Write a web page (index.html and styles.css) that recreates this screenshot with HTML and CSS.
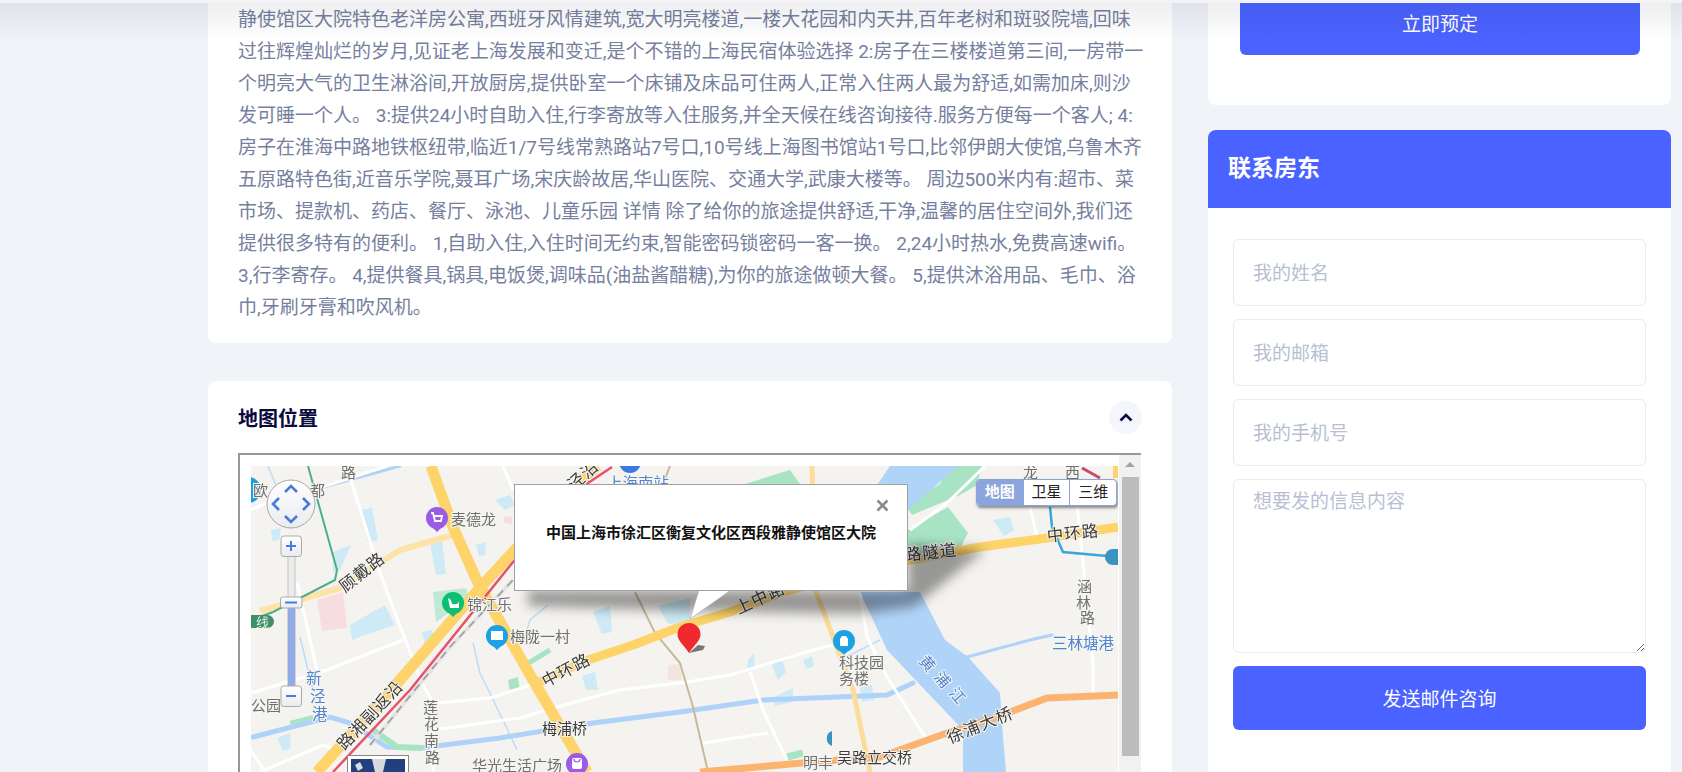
FILE: index.html
```html
<!DOCTYPE html>
<html lang="zh-CN">
<head>
<meta charset="utf-8">
<title>房源详情</title>
<link rel="stylesheet" href="styles.css">
</head>
<body>
<div class="top-shadow"></div>
<div class="page">
  <main class="main-col">
    <section class="card desc-card">
      <p class="desc">静使馆区大院特色老洋房公寓,西班牙风情建筑,宽大明亮楼道,一楼大花园和内天井,百年老树和斑驳院墙,回味过往辉煌灿烂的岁月,见证老上海发展和变迁,是个不错的上海民宿体验选择 2:房子在三楼楼道第三间,一房带一个明亮大气的卫生淋浴间,开放厨房,提供卧室一个床铺及床品可住两人,正常入住两人最为舒适,如需加床,则沙发可睡一个人。 3:提供24小时自助入住,行李寄放等入住服务,并全天候在线咨询接待.服务方便每一个客人; 4:房子在淮海中路地铁枢纽带,临近1/7号线常熟路站7号口,10号线上海图书馆站1号口,比邻伊朗大使馆,乌鲁木齐五原路特色街,近音乐学院,聂耳广场,宋庆龄故居,华山医院、交通大学,武康大楼等。 周边500米内有:超市、菜市场、提款机、药店、餐厅、泳池、儿童乐园 详情 除了给你的旅途提供舒适,干净,温馨的居住空间外,我们还提供很多特有的便利。 1,自助入住,入住时间无约束,智能密码锁密码一客一换。 2,24小时热水,免费高速wifi。 3,行李寄存。 4,提供餐具,锅具,电饭煲,调味品(油盐酱醋糖),为你的旅途做顿大餐。 5,提供沐浴用品、毛巾、浴巾,牙刷牙膏和吹风机。</p>
    </section>
    <section class="card map-card">
      <header class="map-head">
        <h2 class="map-title">地图位置</h2>
        <span class="collapse-btn">
          <svg width="14" height="9" viewBox="0 0 14 9"><path d="M1.5 7.5 7 2l5.500 5.500" fill="none" stroke="#0b0b4a" stroke-width="2.600"/></svg>
        </span>
      </header>
      <div class="map-frame">
        <div class="map-canvas">
          <svg class="map-svg" width="867" height="306" viewBox="251 466 867 306">
            <defs>
              <filter id="soft" x="-5%" y="-5%" width="110%" height="110%"><feGaussianBlur stdDeviation="0.45"/></filter>
              <filter id="shade" x="-20%" y="-60%" width="140%" height="220%"><feGaussianBlur stdDeviation="6"/></filter>
              <linearGradient id="knob" x1="0" y1="0" x2="0" y2="1"><stop offset="0" stop-color="#fff"/><stop offset="1" stop-color="#e9ebee"/></linearGradient>
            </defs>
            <g filter="url(#soft)">
              <rect x="251" y="466" width="867" height="306" fill="#f4f3f0"/>
              <g fill="#cdeaf6">
                <path d="M350 625 385 605 395 625 365 635 352 640Z"/>
                <path d="M362 510 372 508 378 540 368 542Z"/>
                <path d="M430 542 442 540 446 574 436 575Z"/>
                <path d="M476 545 486 542 485 555 479 556Z"/>
                <path d="M333 552 351 545 340 570 333 572Z"/>
                <path d="M271 530 281 528 279 540 272 541Z"/>
                <path d="M422 632 432 630 435 640 426 650Z"/>
                <path d="M582 676 595 672 598 690 586 690Z"/>
                <path d="M593 612 610 606 612 632 602 634Z"/>
                <path d="M658 606 690 598 690 622 668 624Z"/>
                <path d="M772 698 793 688 793 702 775 706Z"/>
                <path d="M803 660 812 656 814 666 806 669Z"/>
                <path d="M748 660 754 653 755 668 747 668Z"/>
                <path d="M993 520 1010 517 1014 530 1004 536Z"/>
                <path d="M277 738 290 733 291 748 283 751Z"/>
                <path d="M495 500 510 495 515 505 505 510Z"/>
                <path d="M860 688 872 685 874 700 862 702Z"/>
                <path d="M772 665 782 660 786 672 778 680Z"/>
              </g>
              <path d="M317 600 343 592 347 628 322 631Z" fill="#f7dde0"/>
              <path d="M503 517 512 516 512 524 505 523Z" fill="#f7dde0"/>
              <path d="M668 665 680 664 682 680 668 680Z" fill="#f3e4df"/>
              <g fill="#a8e4c4">
                <path d="M908 530 948 507 968 533 960 548 908 556Z"/>
                <path d="M950 465 982 465 977 485 960 495 912 515 905 505 940 484Z"/>
                <path d="M745 484 790 470 800 484Z"/>
                <path d="M508 680 518 677 520 690 510 692Z"/>
              </g>
              <path d="M433 592 466 588 470 600 450 612 436 622Z" fill="#bfe8d6"/>
              <path d="M890 466H958L940 482 908 510H860ZM860 592H920L945 640 968 657 1000 693 1003 737 1006 772H963L963 730 925 690 887 650Z" fill="#b0d3f8"/>
              <g fill="none" stroke="#bcdcf7" stroke-width="1.500">
                <path d="M268 466 282 500"/>
                <path d="M300 637 313 690"/>
                <path d="M473 643 480 673 503 720 517 750"/>
                <path d="M880 640 840 660"/>
                <path d="M548 605 530 620 524 640"/>
              </g>
              <g fill="none" stroke="#afd2f8" stroke-linecap="round">
                <path d="M253 737 330 717 350 723 387 747 420 748 500 738 593 723 680 712 763 700 887 695 913 683" stroke-width="5"/>
                <path d="M320 488 400 466" stroke-width="3"/>
                <path d="M967 657 1030 640 1052 635" stroke-width="3"/>
              </g>
              <path d="M373 730 397 747 423 748" fill="none" stroke="#a8e4c4" stroke-width="6"/>
              <path d="M290 723 313 717" fill="none" stroke="#a8e4c4" stroke-width="4"/>
              <path d="M527 664 550 650" fill="none" stroke="#a8e4c4" stroke-width="5"/>
              <path d="M787 757 803 753" fill="none" stroke="#a8e4c4" stroke-width="7"/>
              <g fill="none" stroke="#fff" stroke-width="3" stroke-linejoin="round">
                <path d="M350 477 380 573 413 660 422 683 433 703 433 772"/>
                <path d="M251 693 327 670 403 640"/>
                <path d="M437 703 490 698 537 683"/>
                <path d="M433 730 520 718 553 708 620 690 687 682 730 675 820 648 833 645"/>
                <path d="M750 672 763 710 787 760"/>
                <path d="M703 743 768 733"/>
                <path d="M260 772 323 745 340 752"/>
                <path d="M297 583 317 670"/>
                <path d="M250 510 267 503"/>
                <path d="M313 490 387 466"/>
                <path d="M503 466 513 490"/>
                <path d="M1030 507 1037 537"/>
                <path d="M1077 503 1093 663 1093 693"/>
                <path d="M860 593 867 637 887 677 927 740"/>
                <path d="M910 530 947 503 985 466"/>
                <path d="M250 750 266 772"/>
              </g>
              <path d="M812 466 816 592 853 690 870 772" fill="none" stroke="#fddc9a" stroke-width="5"/>
              <path d="M635 592 655 633 680 663 693 707 708 772M670 466 663 484" fill="none" stroke="#c9b99a" stroke-width="2"/>
              <g fill="none" stroke-linejoin="round" stroke-linecap="butt">
                <path d="M260 611 340 588 400 550 453 535" stroke="#fde3a7" stroke-width="6"/>
                <path d="M431 466 453 527 478 583 533 680 587 772" stroke="#fdd36b" stroke-width="11"/>
                <path d="M317 772 400 680 478 590 513 552 583 478 598 466" stroke="#fdd36b" stroke-width="11"/>
                <path d="M537 683 588 660 633 645 680 627 730 612 780 593 860 570 910 560 980 547 1047 538 1118 527" stroke="#fdd36b" stroke-width="9"/>
                <path d="M333 772 410 690 513 562 588 483 612 467" stroke="#e8516b" stroke-width="2.500"/>
                <path d="M370 745 450 647 513 580" stroke="#e3e3e3" stroke-width="4"/>
                <path d="M370 745 450 647 513 580" stroke="#999" stroke-width="1.500" stroke-dasharray="8 6"/>
                <path d="M1118 695 1047 698 997 717 947 733 880 757 813 762 747 768 700 772" stroke="#fdb36f" stroke-width="7"/>
              </g>
              <path d="M308 466 337 570 335 580 273 612 251 620" fill="none" stroke="#4fae8a" stroke-width="2"/>
              <path d="M1082 468 1100 478" fill="none" stroke="#c8496a" stroke-width="3"/>
              <path d="M1050 507 1052 527 1063 552 1107 556" fill="none" stroke="#3aa6dc" stroke-width="2.500"/>
              <rect x="1105" y="549" width="20" height="16" rx="8" fill="#3a94c0"/>
              <path d="M1113 466h5v12h-5z" fill="#fdd36b"/>
              <rect x="245" y="615" width="29" height="13" rx="6.500" fill="#3f8f66"/>
              <text class="lbl-w" x="256" y="627">线</text>

              <circle cx="248" cy="490" r="13" fill="#1ba1e2"/>
              <circle cx="630" cy="462" r="11" fill="#3c78e6"/>
              <g>
                <circle cx="437" cy="518" r="11" fill="#9a5ce6"/><path d="M432 527h10l-5 5z" fill="#9a5ce6"/>
                <path d="M431 513h2l2 8h6l1-5h-8" fill="none" stroke="#fff" stroke-width="1.800"/>
                <circle cx="453" cy="603" r="11" fill="#0dbf72"/><path d="M448 612h10l-5 5z" fill="#0dbf72"/>
                <path d="M448 598l3 2 1 4h5l2-2v6h-9z" fill="#fff"/>
                <circle cx="497" cy="636" r="11" fill="#1ba1e2"/><path d="M492 645h10l-5 5z" fill="#1ba1e2"/>
                <rect x="491" y="631" width="12" height="9" fill="#fff"/>
                <circle cx="577" cy="764" r="11" fill="#9a5ce6"/>
                <rect x="572" y="758" width="10" height="11" rx="2" fill="#fff"/>
                <path d="M574 759c0 4 6 4 6 0" fill="none" stroke="#9a5ce6" stroke-width="1.200"/>
                <circle cx="844" cy="641" r="11" fill="#1ba1e2"/><path d="M839 650h10l-5 5z" fill="#1ba1e2"/>
                <path d="M840 646v-7l2-3h4l2 3v7z" fill="#fff"/>
                <path d="M832 731a8 8 0 0 0 0 15z" fill="#3a94c0"/>
              </g>

              <g class="lbl">
                <text x="253" y="496">欧</text>
                <text x="310" y="496">都</text>
                <text x="341" y="478">路</text>
                <text x="451" y="525">麦德龙</text>
                <text x="467" y="610">锦江乐</text>
                <text x="510" y="642">梅陇一村</text>
                <text x="251" y="711">公园</text>
                <text x="423" y="713">莲</text>
                <text x="424" y="729">花</text>
                <text x="424" y="746">南</text>
                <text x="425" y="763">路</text>
                <text x="472" y="771">华光生活广场</text>
                <text x="839" y="668">科技园</text>
                <text x="839" y="684">务楼</text>
                <text x="803" y="768">明丰</text>
                <text x="1077" y="592">涵</text>
                <text x="1076" y="608">林</text>
                <text x="1080" y="623">路</text>
                <text x="1023" y="478">龙</text>
                <text x="1065" y="478">西</text>
              </g>
              <g class="lbl lbl-dark lbl-road">
                <text transform="translate(362 572) rotate(-38)" text-anchor="middle" y="6">顾戴路</text>
                <text transform="translate(566 670) rotate(-28)" text-anchor="middle" y="6">中环路</text>
                <text transform="translate(370 715) rotate(-47)" text-anchor="middle" y="6">路湘副返沿</text>
                <text transform="translate(583 475) rotate(-42)" text-anchor="middle" y="6">泾沿</text>
                <text transform="translate(760 598) rotate(-25)" text-anchor="middle" y="6">上中路</text>
                <text transform="translate(931 552) rotate(-6)" text-anchor="middle" y="6">路隧道</text>
                <text transform="translate(1073 533) rotate(-6)" text-anchor="middle" y="6">中环路</text>
                <text transform="translate(980 725) rotate(-22)" text-anchor="middle" y="6">徐浦大桥</text>
              </g>
              <g class="lbl lbl-dark">
                <text x="542" y="734">梅浦桥</text>
                <text x="837" y="763">吴路立交桥</text>
              </g>
              <g class="lbl lbl-blue">
                <text x="306" y="684">新</text>
                <text x="310" y="702">泾</text>
                <text x="312" y="720">港</text>
                <text x="1052" y="649">三林塘港</text>
                <text x="607" y="489">上海南站</text>
                <text transform="translate(927 664) rotate(50)" text-anchor="middle" y="5">黄</text>
                <text transform="translate(942 680) rotate(50)" text-anchor="middle" y="5">浦</text>
                <text transform="translate(957 696) rotate(50)" text-anchor="middle" y="5">江</text>
              </g>
            </g>

            <path d="M528 590 528 606 690 611 860 614 915 606 985 550 908 544 908 590Z" fill="#000" fill-opacity=".38" filter="url(#shade)"/>
            <path d="M699 590 690 619 731 590Z" fill="#fff" stroke="#a0a0a0" stroke-width=".6"/>

            <g>
              <path d="M689 653 698 645 705 646 703 650Z" fill="#777"/>
              <path d="M689 653C684 645 677.500 641 677.500 634.500A11.500 11.500 0 0 1 700.500 634.500C700.500 641 694 645 689 653Z" fill="#ee2a2e"/>
            </g>

            <g>
              <circle cx="291" cy="504" r="24" fill="url(#knob)" stroke="#a8a8a8" stroke-width="1"/>
              <path d="M285 492 291 486 297 492M285 516 291 522 297 516M279 498 273 504 279 510M303 498 309 504 303 510" fill="none" stroke="#4a79d8" stroke-width="2.600"/>
              <rect x="288" y="555" width="7" height="46" fill="#ececec" stroke="#bbb" stroke-width=".8"/>
              <rect x="288" y="606" width="7" height="82" fill="#8fabf0" stroke="#a5a5a5" stroke-width=".8"/>
              <rect x="281" y="536" width="20.500" height="20.500" rx="3" fill="url(#knob)" stroke="#aaa"/>
              <path d="M291 541v10M286 546h10" stroke="#4a79e0" stroke-width="2"/>
              <rect x="280.500" y="597" width="21.500" height="11" rx="2" fill="url(#knob)" stroke="#aaa"/>
              <path d="M285 602.500h12" stroke="#4a79e0" stroke-width="2"/>
              <rect x="281" y="686" width="20.500" height="20.500" rx="3" fill="url(#knob)" stroke="#aaa"/>
              <path d="M286 696h10" stroke="#4a79e0" stroke-width="2"/>
            </g>

            <g>
              <rect x="347.500" y="755.500" width="61" height="20" fill="#fff" stroke="#888"/>
              <rect x="351" y="759" width="54" height="16" fill="#23407e"/>
              <path d="M372 759h14l-3 13h-8ZM355 765l5-3 3 6-5 3Z" fill="#d7dbe0"/>
            </g>
          </svg>

          <div class="popup">
            <span class="popup-close">
              <svg width="13" height="13" viewBox="0 0 13 13"><path d="M1.500 1.500 11.500 11.500M11.500 1.500 1.500 11.500" stroke="#8b8b8b" stroke-width="2.600"/></svg>
            </span>
            <p class="popup-text">中国上海市徐汇区衡复文化区西段雅静使馆区大院</p>
          </div>

          <div class="layer-switch">
            <span class="layer-btn is-active">地图</span>
            <span class="layer-btn">卫星</span>
            <span class="layer-btn">三维</span>
          </div>
        </div>
        <div class="frame-scroll">
          <span class="frame-arrow"></span>
          <span class="frame-thumb"></span>
        </div>
      </div>
    </section>
  </main>

  <aside class="side-col">
    <section class="card book-card">
      <button class="btn btn-book" type="button">立即预定</button>
    </section>
    <section class="card contact-card">
      <h3 class="contact-title">联系房东</h3>
      <form class="contact-form">
        <input class="field" type="text" placeholder="我的姓名">
        <input class="field" type="text" placeholder="我的邮箱">
        <input class="field" type="text" placeholder="我的手机号">
        <textarea class="field field-area" placeholder="想要发的信息内容"></textarea>
        <button class="btn btn-send" type="button">发送邮件咨询</button>
      </form>
    </section>
  </aside>
</div>
</body>
</html>
```
FILE: styles.css
```css
* { box-sizing: border-box; }
html, body { margin: 0; height: 772px; overflow: hidden; }
body {
  background: #f0f3f8;
  font-family: Roboto, "Noto Sans CJK SC", sans-serif;
  font-size: 19px;
  color: #76809e;
}
.top-shadow {
  position: absolute;
  top: 0; left: 0; right: 0;
  height: 42px;
  z-index: 5;
  pointer-events: none;
  background: linear-gradient(#f4f4f6 0, #f4f4f6 3px, rgba(20, 20, 50, .07) 3px, rgba(20, 20, 50, 0) 42px);
}
.page {
  display: flex;
  align-items: flex-start;
  gap: 36px;
  padding-left: 208px;
  height: 772px;
  overflow: hidden;
}
.main-col { width: 964px; flex: none; display: flex; flex-direction: column; gap: 38px; }
.side-col { width: 463px; flex: none; display: flex; flex-direction: column; gap: 25px; }
.card { background: #fff; border-radius: 8px; }

.desc-card { padding: 4px 26px 19px 30px; border-radius: 0 0 8px 8px; }
.desc { margin: 0; line-height: 32px; word-break: break-all; }

.map-card { padding: 0 30px; height: 500px; }
.map-head { height: 72px; display: flex; align-items: center; justify-content: space-between; }
.map-title { margin: 0; font-size: 20px; font-weight: 700; color: #0a0a3c; }
.collapse-btn {
  width: 33px; height: 33px; border-radius: 50%;
  background: #f5f6fb;
  display: flex; align-items: center; justify-content: center;
}
.map-frame {
  display: flex;
  width: 903px;
  height: 400px;
  border-top: 2px solid #999;
  border-left: 2px solid #999;
  padding-left: 11px;
  background: #fff;
}
.map-canvas {
  position: relative;
  width: 867px;
  height: 388px;
  margin-top: 11px;
  flex: none;
  overflow: hidden;
}
.map-svg { display: block; }
.lbl text { font-size: 15px; fill: #6f6f6f; paint-order: stroke; stroke: #f6f5f2; stroke-width: 2px; }
.lbl-dark text { fill: #3b3b3b; }
.lbl-road text { font-size: 16.500px; letter-spacing: 1px; }
.lbl-blue text { fill: #4f86cf; font-size: 15.500px; }
.lbl-w { font-size: 13px; fill: #dff0e8; }

.popup {
  position: absolute;
  left: 263px; top: 18px;
  width: 394px; height: 107px;
  background: #fff;
  border: 1px solid #a0a0a0;
  display: flex;
  justify-content: center;
}
.popup-text { margin: 38px 0 0; font-size: 15px; line-height: 20px; font-weight: 700; color: #111; white-space: nowrap; }
.popup-close { position: absolute; right: 18px; top: 14px; line-height: 0; }

.layer-switch {
  position: absolute;
  left: 725px; top: 13px;
  width: 141px; height: 27px;
  display: flex;
  background: #fff;
  border: 1px solid #8ba5dc;
  border-radius: 4px;
  box-shadow: 1px 2px 3px rgba(0, 0, 0, .45);
  overflow: hidden;
}
.layer-btn { flex: 1; font-size: 15px; line-height: 25px; text-align: center; color: #222; border-left: 1px solid #8ba5dc; }
.layer-btn:first-child { border-left: 0; }
.layer-btn.is-active { background: #8ba5dc; color: #fff; font-weight: 700; }

.frame-scroll {
  width: 22px;
  flex: none;
  margin-left: 1px;
  background: #f1f1f1;
  display: flex;
  flex-direction: column;
  align-items: center;
  padding-top: 7px;
}
.frame-arrow { width: 0; height: 0; border: 5px solid transparent; border-top: 0; border-bottom: 5px solid #a3a3a3; }
.frame-thumb { width: 17px; height: 279px; margin-top: 10px; background: #bcbcbc; }

.btn {
  display: block;
  border: 0;
  color: #fff;
  background: #4a62ff;
  font: inherit;
  text-align: center;
}
.book-card { height: 105px; padding: 0 31px 0 32px; border-radius: 0 0 8px 8px; }
.btn-book { width: 100%; height: 55px; padding: 0 0 10px; border-radius: 0 0 6px 6px; }
.contact-card { height: 660px; }
.contact-title {
  margin: 0;
  height: 78px;
  padding-left: 20px;
  font-size: 23px;
  line-height: 78px;
  font-weight: 700;
  color: #fff;
  background: #4a62ff;
  border-radius: 8px 8px 0 0;
}
.contact-form { display: flex; flex-direction: column; gap: 13px; padding: 31px 25px 0; }
.field {
  display: block;
  width: 100%;
  height: 67px;
  padding: 2px 19px 0;
  border: 1px solid #e8eaf3;
  border-radius: 6px;
  background: #fff;
  font: inherit;
  color: #76809e;
  outline: 0;
}
.field::placeholder { color: #b8bfd3; opacity: 1; }
.field-area { height: 174px; padding-top: 8px; line-height: 28px; }
.btn-send { width: 100%; height: 64px; padding: 0 0 2px; border-radius: 6px; }
```
